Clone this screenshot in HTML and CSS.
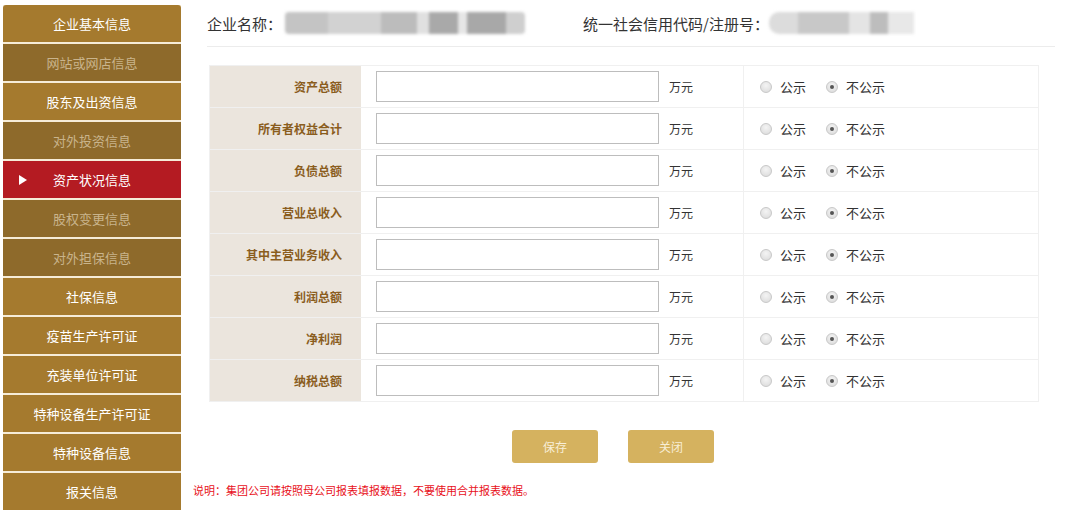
FILE: index.html
```html
<!DOCTYPE html>
<html lang="zh-CN">
<head>
<meta charset="utf-8">
<title>资产状况信息</title>
<link rel="stylesheet" href="styles.css">
</head>
<body>
<div class="page">
  <nav class="sidebar">
    <div class="nav-item first">企业基本信息</div>
    <div class="nav-item disabled">网站或网店信息</div>
    <div class="nav-item">股东及出资信息</div>
    <div class="nav-item disabled">对外投资信息</div>
    <div class="nav-item active"><span class="arrow"></span>资产状况信息</div>
    <div class="nav-item disabled">股权变更信息</div>
    <div class="nav-item disabled">对外担保信息</div>
    <div class="nav-item">社保信息</div>
    <div class="nav-item">疫苗生产许可证</div>
    <div class="nav-item">充装单位许可证</div>
    <div class="nav-item">特种设备生产许可证</div>
    <div class="nav-item">特种设备信息</div>
    <div class="nav-item">报关信息</div>
  </nav>
  <main class="main">
    <div class="header">
      <span class="h-label">企业名称：</span><span class="blur blur-name"></span>
      <span class="h-label h-code">统一社会信用代码/注册号：</span><span class="blur blur-code"></span>
    </div>
    <div class="form-table">
      <div class="row"><div class="label">资产总额</div><div class="field"><span class="input"></span><span class="unit">万元</span></div><div class="pub"><span class="radio"></span><span class="rtxt">公示</span><span class="radio checked"></span><span class="rtxt">不公示</span></div></div>
      <div class="row"><div class="label">所有者权益合计</div><div class="field"><span class="input"></span><span class="unit">万元</span></div><div class="pub"><span class="radio"></span><span class="rtxt">公示</span><span class="radio checked"></span><span class="rtxt">不公示</span></div></div>
      <div class="row"><div class="label">负债总额</div><div class="field"><span class="input"></span><span class="unit">万元</span></div><div class="pub"><span class="radio"></span><span class="rtxt">公示</span><span class="radio checked"></span><span class="rtxt">不公示</span></div></div>
      <div class="row"><div class="label">营业总收入</div><div class="field"><span class="input"></span><span class="unit">万元</span></div><div class="pub"><span class="radio"></span><span class="rtxt">公示</span><span class="radio checked"></span><span class="rtxt">不公示</span></div></div>
      <div class="row"><div class="label">其中主营业务收入</div><div class="field"><span class="input"></span><span class="unit">万元</span></div><div class="pub"><span class="radio"></span><span class="rtxt">公示</span><span class="radio checked"></span><span class="rtxt">不公示</span></div></div>
      <div class="row"><div class="label">利润总额</div><div class="field"><span class="input"></span><span class="unit">万元</span></div><div class="pub"><span class="radio"></span><span class="rtxt">公示</span><span class="radio checked"></span><span class="rtxt">不公示</span></div></div>
      <div class="row"><div class="label">净利润</div><div class="field"><span class="input"></span><span class="unit">万元</span></div><div class="pub"><span class="radio"></span><span class="rtxt">公示</span><span class="radio checked"></span><span class="rtxt">不公示</span></div></div>
      <div class="row last"><div class="label">纳税总额</div><div class="field"><span class="input"></span><span class="unit">万元</span></div><div class="pub"><span class="radio"></span><span class="rtxt">公示</span><span class="radio checked"></span><span class="rtxt">不公示</span></div></div>
    </div>
    <div class="buttons">
      <span class="btn">保存</span>
      <span class="btn">关闭</span>
    </div>
    <p class="note">说明：集团公司请按照母公司报表填报数据，不要使用合并报表数据。</p>
  </main>
</div>
</body>
</html>
```

FILE: styles.css
```css
* { box-sizing: border-box; }
html, body {
  margin: 0;
  padding: 0;
  background: #fff;
  font-family: "Noto Sans CJK SC", "Liberation Sans", sans-serif;
}
.page {
  display: flex;
  align-items: flex-start;
  width: 1080px;
  height: 516px;
  overflow: hidden;
}
.sidebar {
  width: 178px;
  margin: 5px 0 0 3px;
  display: flex;
  flex-direction: column;
  gap: 2px;
  background: #f6ecd8;
}
.nav-item {
  position: relative;
  height: 37px;
  line-height: 37px;
  text-align: center;
  font-size: 13px;
  color: #fff;
  background: #a57a2e;
}
.nav-item.first { border-radius: 3px 3px 0 0; }
.nav-item.disabled {
  background: #8e6a2b;
  color: #c9b48c;
}
.nav-item.active {
  background: #b41b22;
  color: #fff;
}
.arrow {
  position: absolute;
  left: 16px;
  top: 14px;
  width: 0;
  height: 0;
  border-top: 5px solid transparent;
  border-bottom: 5px solid transparent;
  border-left: 8px solid #fff;
}
.main {
  flex: 1;
  padding-left: 12px;
}
.header {
  display: flex;
  align-items: center;
  height: 47px;
  margin: 0 25px 0 14px;
  border-bottom: 1px solid #ececec;
  font-size: 15px;
  color: #333;
}
.h-label { white-space: nowrap; }
.h-code { margin-left: 58px; }
.blur {
  display: inline-block;
  height: 22px;
  border-radius: 4px;
  filter: blur(1.5px);
}
.blur-name {
  margin-left: 3px;
  width: 240px;
  background: linear-gradient(90deg, #c4c4c4 0 18%, #d2d2d2 18% 40%, #bcbcbc 40% 55%, #e0e0e0 55% 60%, #a9a9a9 60% 72%, #e6e6e6 72% 76%, #a8a8a8 76% 92%, #cfcfcf 92% 100%);
}
.blur-code {
  width: 145px;
  border-radius: 10px 0 0 10px;
  background: linear-gradient(90deg, #dcdcdc 0 20%, #c8c8c8 20% 55%, #e4e4e4 55% 70%, #bdbdbd 70% 82%, #e8e8e8 82% 100%);
}
.form-table {
  margin: 18px 0 0 16px;
  width: 830px;
  border: 1px solid #f0f0f0;
  border-bottom: none;
}
.row {
  display: flex;
  height: 42px;
  border-bottom: 1px solid #f0f0f0;
}
.label {
  width: 151px;
  background: #ebe5dd;
  text-align: right;
  padding-right: 19px;
  line-height: 41px;
  font-size: 12px;
  font-weight: bold;
  color: #8a5d1d;
}
.field {
  width: 383px;
  display: flex;
  align-items: center;
  padding-left: 15px;
  border-right: 1px solid #f0f0f0;
}
.input {
  width: 283px;
  height: 31px;
  border: 1px solid #bdbdbd;
  background: #fff;
}
.unit {
  margin-left: 10px;
  font-size: 12px;
  color: #333;
}
.pub {
  flex: 1;
  display: flex;
  align-items: center;
  padding-left: 16px;
  font-size: 13px;
  color: #333;
}
.radio {
  width: 12px;
  height: 12px;
  border-radius: 50%;
  border: 1px solid #c8c8c8;
  background: radial-gradient(circle at 50% 35%, #f4f4f4, #d9d9d9);
  position: relative;
}
.radio.checked::after {
  content: "";
  position: absolute;
  left: 3px;
  top: 3px;
  width: 4px;
  height: 4px;
  border-radius: 50%;
  background: #555;
}
.rtxt { margin-left: 8px; margin-right: 20px; }
.buttons {
  display: flex;
  gap: 30px;
  margin: 28px 0 0 319px;
}
.btn {
  width: 86px;
  height: 33px;
  line-height: 33px;
  text-align: center;
  background: #d5b25f;
  color: #f8eed6;
  font-size: 12px;
  border-radius: 3px;
}
.note {
  margin: 19px 0 0 0;
  font-size: 11px;
  color: #e8101a;
}
```
